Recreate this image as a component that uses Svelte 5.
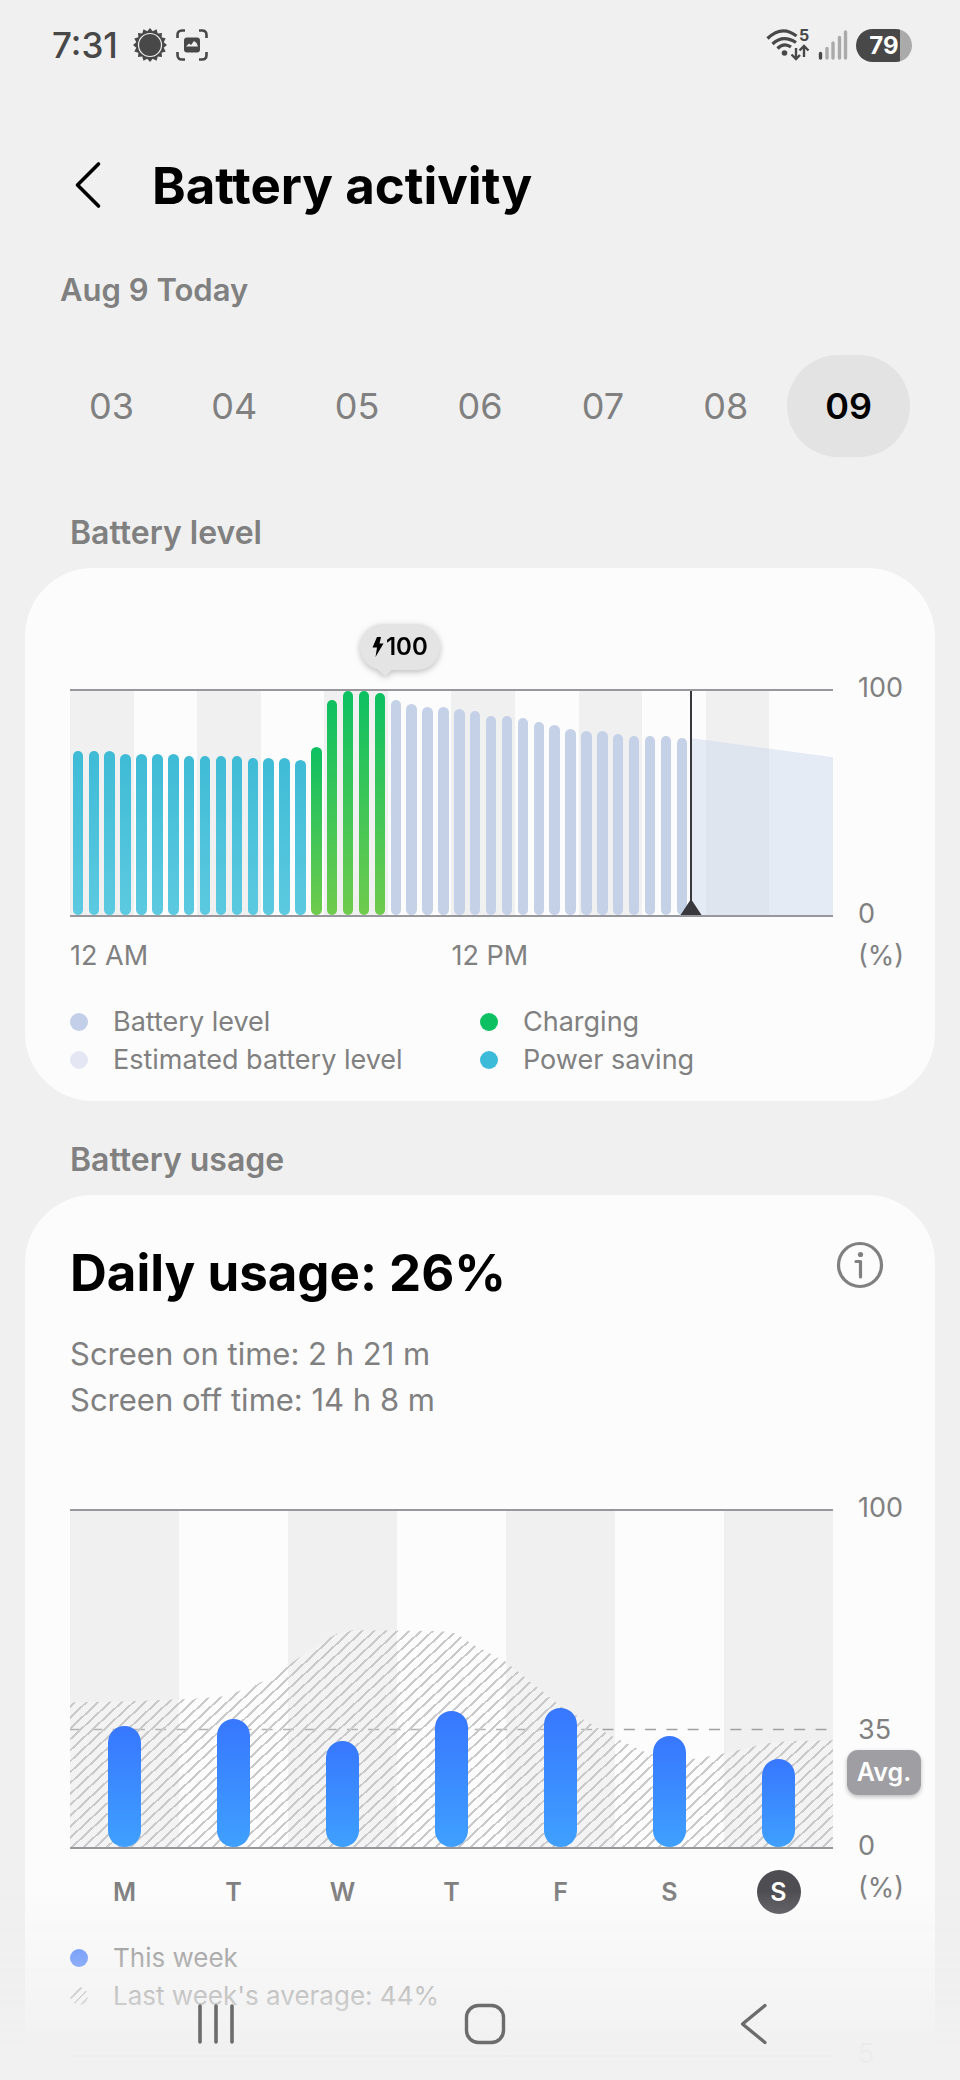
<script lang="ts">
  /**
   * Battery activity — day picker, battery level chart and weekly usage chart.
   * Levels and usages are percentages; the charts scale them to the plot height.
   */
  type Kind = 'saving' | 'charging' | 'level';

  const dates = ['03', '04', '05', '06', '07', '08', '09'];
  let selected = $state('09');

  // One sample per half hour, midnight up to now.
  const levels = [
    73, 73, 73, 72, 72, 72, 72, 71, 71, 71, 71, 70, 70, 70, 69,
    75, 96, 100, 100, 99,
    96, 94, 93, 93, 92, 91, 89, 89, 88, 86, 85, 83, 82, 82, 81, 80, 80, 80, 79
  ];
  const SLOTS = 48;
  const nowPct = (levels.length / SLOTS) * 100;

  function kindOf(i: number): Kind {
    if (i < 15) return 'saving';
    return i < 20 ? 'charging' : 'level';
  }

  const week = [
    { day: 'M', usage: 36 },
    { day: 'T', usage: 38 },
    { day: 'W', usage: 31.5 },
    { day: 'T', usage: 40.5 },
    { day: 'F', usage: 41.5 },
    { day: 'S', usage: 33 },
    { day: 'S', usage: 26.3, today: true }
  ];

  // Last week's outline: [x%, value%] pairs, with the corners eased.
  const lastWeek = [
    [0, 43], [7, 43.3], [17, 44.2], [20, 44.8], [23, 47], [26, 50], [33, 61],
    [35, 63.5], [37, 64.5], [48.5, 64.3], [50.5, 63.6], [53, 60], [57, 55.3],
    [64.3, 42], [71, 33], [75, 28.6], [78.5, 26], [82, 26.3], [86, 28],
    [91, 30.7], [94, 31.5], [100, 31.8]
  ];
  const outline =
    'polygon(0 100%, ' +
    lastWeek.map(([x, v]) => `${x}% ${100 - v}%`).join(', ') +
    ', 100% 100%)';

  const sunRays = Array.from({ length: 32 }, (_, i) => {
    const r = i % 2 ? 14 : 17;
    const a = (i * Math.PI) / 16;
    return `${(18 + r * Math.sin(a)).toFixed(1)},${(18 - r * Math.cos(a)).toFixed(1)}`;
  }).join(' ');
</script>

<div class="screen">
  <div class="status">
    <div class="status-side">
      <span class="clock">7:31</span>
      <svg width="36" height="36" viewBox="0 0 36 36" aria-hidden="true">
        <polygon points={sunRays} fill="#484848" />
        <circle cx="18" cy="18" r="11.5" fill="none" stroke="#f0f0f0" stroke-width="1.2" />
      </svg>
      <svg width="32" height="32" viewBox="0 0 32 32" aria-hidden="true">
        <path
          d="M1.5 9V6q0-4.500 4.500-4.500h3M23 1.500h3q4.500 0 4.500 4.500v3M30.500 23v3q0 4.500-4.500 4.500h-3M9 30.500H6q-4.500 0-4.500-4.500v-3"
          fill="none" stroke="#484848" stroke-width="2.6" />
        <rect x="8" y="8.500" width="16" height="15" rx="3" fill="#484848" />
        <path d="M10 17.500l3-3 2 1.500 3-4 2.500 2 1.500 3.500z" fill="#f0f0f0" />
      </svg>
    </div>
    <div class="status-side">
      <svg width="44" height="42" viewBox="0 -4 44 42" aria-hidden="true">
        <g fill="none" stroke="#484848" stroke-width="3.2">
          <path d="M1.500 10.500Q16-3.500 30.500 8" />
          <path d="M6.500 16Q17 6 30 14.500" />
          <path d="M11.500 20.500Q18 14 25 19" />
        </g>
        <circle cx="18.500" cy="25" r="2.800" fill="#484848" />
        <path
          d="M30 20v10.500M25.500 26.500L30 31l4-4M38 29V18.500M33.500 22.500L38 18l4.500 4.500"
          fill="none" stroke="#484848" stroke-width="2.4" />
        <text x="33" y="13" class="band">5</text>
      </svg>
      <svg width="30" height="32" viewBox="0 0 30 32" aria-hidden="true">
        <g stroke-width="3.400" stroke-linecap="round" stroke="#aaa">
          <path d="M2.500 24.500v4.500" stroke="#484848" />
          <path d="M9 19.500v9.500M15 14v15M21.500 8.500v20.500M27.500 3v26" />
        </g>
      </svg>
      <span class="battery">79</span>
    </div>
  </div>

  <header class="title-bar">
    <button type="button" class="back" aria-label="Navigate up">
      <svg width="28" height="50" viewBox="0 0 28 50" aria-hidden="true">
        <path d="M24.500 3L3.500 24l21 21" fill="none" stroke="#000" stroke-width="3.600" stroke-linecap="round" stroke-linejoin="round" />
      </svg>
    </button>
    <h1>Battery activity</h1>
  </header>

  <main>
    <p class="current-date">Aug 9 Today</p>

    <div class="dates">
      {#each dates as date (date)}
        <button
          type="button"
          class="date"
          class:selected={date === selected}
          aria-pressed={date === selected}
          onclick={() => (selected = date)}
        >
          {date}
        </button>
      {/each}
    </div>

    <h2>Battery level</h2>
    <section class="card level-card">
      <div class="chart">
        <div class="plot level-plot">
          <div class="layer bands">
            {#each { length: 12 } as _, i (i)}
              <span class="stripe"></span>
            {/each}
          </div>
          <div class="layer estimate" style="margin-left: {nowPct}%"></div>
          <div class="layer bars" style="width: {nowPct}%">
            {#each levels as value, i (i)}
              <span class="slot"><span class="bar {kindOf(i)}" style="height: {value}%"></span></span>
            {/each}
          </div>
          <div class="now" style="left: {nowPct}%">
            <svg width="22" height="16" viewBox="0 0 22 16" aria-hidden="true">
              <path d="M11 0l10.500 16H.5z" fill="#38383d" />
            </svg>
          </div>
          <div class="bubble">
            <svg width="12" height="20" viewBox="0 0 12 20" aria-hidden="true">
              <path d="M5 0h4L7.500 6.500H11.500L3.500 20 5 10.500H.5z" fill="#000" />
            </svg>
            100
          </div>
        </div>
        <div class="scale">
          <span>100</span>
          <span>0</span>
        </div>
        <div class="hours"><span>12 AM</span><span>12 PM</span></div>
        <span class="unit">(%)</span>
      </div>
      <ul class="legend two">
        <li><i class="dot level-dot"></i>Battery level</li>
        <li><i class="dot charging-dot"></i>Charging</li>
        <li><i class="dot estimate-dot"></i>Estimated battery level</li>
        <li><i class="dot saving-dot"></i>Power saving</li>
      </ul>
    </section>

    <h2>Battery usage</h2>
    <section class="card usage-card">
      <div class="usage-head">
        <h3>Daily usage: 26%</h3>
        <button type="button" aria-label="Information">
          <svg width="48" height="48" viewBox="0 0 48 48" aria-hidden="true">
            <circle cx="24" cy="24" r="21.500" fill="none" stroke="#808080" stroke-width="3.200" />
            <circle cx="24.500" cy="13.500" r="2.600" fill="#808080" />
            <path d="M20 20.500h4.500V36" fill="none" stroke="#808080" stroke-width="3.200" stroke-linecap="round" stroke-linejoin="round" />
          </svg>
        </button>
      </div>
      <p class="times">Screen on time: 2 h 21 m<br />Screen off time: 14 h 8 m</p>

      <div class="chart">
        <div class="plot usage-plot">
          <div class="layer bands">
            {#each week as _, i (i)}
              <span class="stripe"></span>
            {/each}
          </div>
          <div class="layer hatch" style="clip-path: {outline}"></div>
          <svg class="layer" width="100%" height="100%" aria-hidden="true">
            <line x1="0" x2="100%" y1="65%" y2="65%" stroke="#a0a0a0" stroke-width="1.500" stroke-dasharray="11 10.300" />
          </svg>
          <div class="layer bars">
            {#each week as { usage }, i (i)}
              <span class="slot"><span class="bar usage" style="height: {usage}%"></span></span>
            {/each}
          </div>
        </div>
        <div class="scale">
          <span>100</span>
          <span class="avg-value">35</span>
          <span class="avg">Avg.</span>
          <span>0</span>
        </div>
        <div class="weekdays">
          {#each week as { day, today }, i (i)}
            <span class="weekday" class:today>{day}</span>
          {/each}
        </div>
        <span class="unit">(%)</span>
      </div>
      <ul class="legend">
        <li><i class="dot week-dot"></i>This week</li>
        <li><i class="dot hatch-dot"></i>Last week's average: 44%</li>
      </ul>
      <div class="chart next">
        <div class="next-plot"></div>
        <span class="scale">5</span>
      </div>
    </section>
  </main>

  <nav class="nav-bar" aria-label="System navigation">
    <button type="button" aria-label="Recents">
      <svg width="42" height="42" viewBox="0 0 42 42" aria-hidden="true">
        <path d="M5 3v36M21 3v36M37 3v36" stroke="#6c6c6c" stroke-width="3.600" stroke-linecap="round" />
      </svg>
    </button>
    <button type="button" aria-label="Home">
      <svg width="42" height="42" viewBox="0 0 42 42" aria-hidden="true">
        <rect x="2.500" y="2.500" width="37" height="37" rx="12" fill="none" stroke="#6c6c6c" stroke-width="3.400" />
      </svg>
    </button>
    <button type="button" aria-label="Back">
      <svg width="42" height="42" viewBox="0 0 42 42" aria-hidden="true">
        <path d="M32 2.500L9.500 21 32 39.500" fill="none" stroke="#6c6c6c" stroke-width="3.400" stroke-linecap="round" stroke-linejoin="round" />
      </svg>
    </button>
  </nav>
</div>

<style>
  :global(body) {
    background: #f0f0f0;
  }

  .screen {
    height: 100vh;
    overflow: hidden;
    background: #f0f0f0;
    color: #808080;
    font-family: Inter, Roboto, sans-serif;
    font-size: 27px;
    line-height: 38px;
  }

  button {
    padding: 0;
    border: 0;
    background: none;
    color: inherit;
    font: inherit;
    cursor: pointer;
  }

  h1,
  h2,
  h3,
  p,
  ul {
    margin: 0;
    padding: 0;
  }

  svg {
    display: block;
  }

  /* status bar */
  .status {
    display: flex;
    justify-content: space-between;
    align-items: center;
    height: 90px;
    padding: 0 48px 0 52px;
    color: #484848;
  }
  .status-side {
    display: flex;
    align-items: center;
    gap: 8px;
  }
  .clock {
    margin-right: 6px;
    font-size: 35px;
    font-weight: 500;
  }
  .band {
    font-size: 16px;
    font-weight: 700;
    line-height: 16px;
    fill: #484848;
  }
  .battery {
    width: 56px;
    height: 33px;
    border-radius: 17px;
    background: linear-gradient(90deg, #484848 78%, #aaa 78%);
    color: #fff;
    font-size: 24px;
    font-weight: 700;
    line-height: 33px;
    text-align: center;
  }

  /* header */
  .title-bar {
    display: flex;
    align-items: center;
    gap: 50px;
    height: 192px;
    padding: 0 74px;
    box-sizing: border-box;
  }
  h1,
  h3 {
    color: #000;
    font-size: 51px;
    font-weight: 700;
    line-height: 60px;
  }
  .title-bar + main {
    margin-top: -12px;
  }
  .current-date {
    padding: 0 60px;
    font-size: 31px;
    font-weight: 600;
    line-height: 40px;
  }

  .dates {
    display: grid;
    grid-template-columns: repeat(7, 1fr);
    margin: 45px 50px 57px;
  }
  .date {
    height: 102px;
    border-radius: 51px;
    font-size: 36px;
  }
  .date.selected {
    background: #e3e3e3;
    color: #000;
    font-weight: 600;
  }

  h2 {
    padding: 0 70px;
    font-size: 32px;
    font-weight: 600;
    line-height: 38px;
  }

  .card {
    margin: 16px 25px 40px;
    padding: 0 25px 0 45px;
    border-radius: 68px;
    background: #fcfcfd;
  }
  .level-card {
    padding-top: 121px;
    padding-bottom: 22px;
  }
  .usage-card {
    padding-top: 48px;
    padding-bottom: 200px;
  }

  /* charts */
  .chart {
    display: grid;
    grid-template-columns: 1fr 52px;
    column-gap: 25px;
  }
  .plot {
    position: relative;
    display: grid;
    border-top: 2px solid #98989c;
    border-bottom: 2px solid #98989c;
  }
  .layer {
    grid-area: 1 / 1;
  }
  .level-plot {
    height: 224px;
  }
  .usage-plot {
    height: 336px;
  }
  .bands,
  .bars {
    display: flex;
  }
  .bars {
    z-index: 1;
  }
  .stripe {
    flex: 1;
  }
  .stripe:nth-child(odd) {
    background: #f0f0f0;
  }
  .slot {
    flex: 1;
    display: flex;
    justify-content: center;
    align-items: flex-end;
  }
  .bar {
    width: 66%;
    border-radius: 20px;
  }
  .saving {
    background: linear-gradient(#3fbbd6, #5ccae0);
  }
  .charging {
    background: linear-gradient(#0dc062, #6fcb4d);
  }
  .level {
    background: #c4d1e7;
  }
  .usage {
    width: 33px;
    background: linear-gradient(#3777ff, #3fa0ff);
  }
  .estimate {
    background: rgba(204, 218, 238, 0.5);
    clip-path: polygon(0 21%, 100% 29.6%, 100% 100%, 0 100%);
  }
  .hatch {
    background: repeating-linear-gradient(
      -43deg,
      rgba(255, 255, 255, 0.2) 0 6px,
      #cacacc 6px 8px
    );
  }
  .now {
    position: absolute;
    z-index: 2;
    top: 0;
    bottom: 0;
    width: 2px;
    background: #38383d;
  }
  .now svg {
    position: absolute;
    bottom: 0;
    left: -10px;
  }
  .bubble {
    position: absolute;
    bottom: calc(100% + 21px);
    left: 38%;
    display: flex;
    align-items: center;
    gap: 2px;
    height: 46px;
    padding: 0 12px;
    border-radius: 23px;
    background: #e4e4e4;
    color: #000;
    font-size: 24px;
    font-weight: 600;
    filter: drop-shadow(0 2px 3px rgba(0, 0, 0, 0.25));
  }
  .bubble::after {
    content: '';
    position: absolute;
    top: 44px;
    left: 16px;
    border: 9px solid transparent;
    border-top: 8px solid #e4e4e4;
    border-bottom: 0;
  }

  .scale {
    display: flex;
    flex-direction: column;
    justify-content: space-between;
    margin: -20px 0 -16px;
  }
  .avg-value {
    margin-top: auto;
  }
  .avg {
    align-self: center;
    margin: 1px -12px 32px;
    padding: 0 10px;
    border-radius: 11px;
    background: #9f9ea3;
    box-shadow: 0 2px 4px rgba(0, 0, 0, 0.25);
    color: #fff;
    font-size: 25px;
    font-weight: 600;
    line-height: 45px;
  }
  .hours {
    display: grid;
    grid-template-columns: 1fr 1fr;
    padding-top: 20px;
  }
  .unit {
    padding-top: 20px;
  }
  .weekdays {
    display: flex;
    justify-content: space-around;
    padding-top: 21px;
  }
  .weekday {
    width: 44px;
    height: 44px;
    border-radius: 50%;
    font-size: 25px;
    font-weight: 600;
    line-height: 44px;
    text-align: center;
  }
  .today {
    background: #4e4d52;
    color: #fff;
  }

  .legend {
    margin-top: 28px;
    list-style: none;
  }
  .usage-card .legend {
    margin-top: 25px;
    font-size: 26px;
  }
  .two {
    display: grid;
    grid-template-columns: 410px 1fr;
  }
  .legend li {
    display: flex;
    align-items: center;
    gap: 25px;
  }
  .dot {
    width: 18px;
    height: 18px;
    border-radius: 50%;
  }
  .level-dot {
    background: #c3cfe8;
  }
  .estimate-dot {
    background: #e4e7f3;
  }
  .charging-dot {
    background: #0dc062;
  }
  .saving-dot {
    background: #3cbbd8;
  }
  .week-dot {
    background: #3a76ff;
  }
  .hatch-dot {
    background: repeating-linear-gradient(-45deg, transparent 0 4px, #a8a8a8 4px 6px);
  }

  /* usage card */
  .usage-head {
    display: flex;
    justify-content: space-between;
    align-items: flex-start;
    padding-right: 26px;
  }
  .usage-head button {
    margin-top: -2px;
  }
  .times {
    margin: 28px 0 86px;
    font-size: 31px;
    line-height: 46px;
  }
  .next {
    margin-top: 40px;
  }
  .next-plot {
    height: 90px;
    border-top: 2px solid #b0b0b4;
  }

  /* the page fades out under the navigation keys */
  .nav-bar {
    position: fixed;
    z-index: 3;
    right: 0;
    bottom: 0;
    left: 0;
    display: flex;
    justify-content: space-between;
    align-items: flex-end;
    height: 190px;
    padding: 0 185px 35px 195px;
    box-sizing: border-box;
    background: linear-gradient(
      rgba(240, 240, 240, 0),
      rgba(240, 240, 240, 0.4) 35%,
      rgba(240, 240, 240, 0.68) 60%,
      rgba(240, 240, 240, 0.96) 82%
    );
  }
</style>
